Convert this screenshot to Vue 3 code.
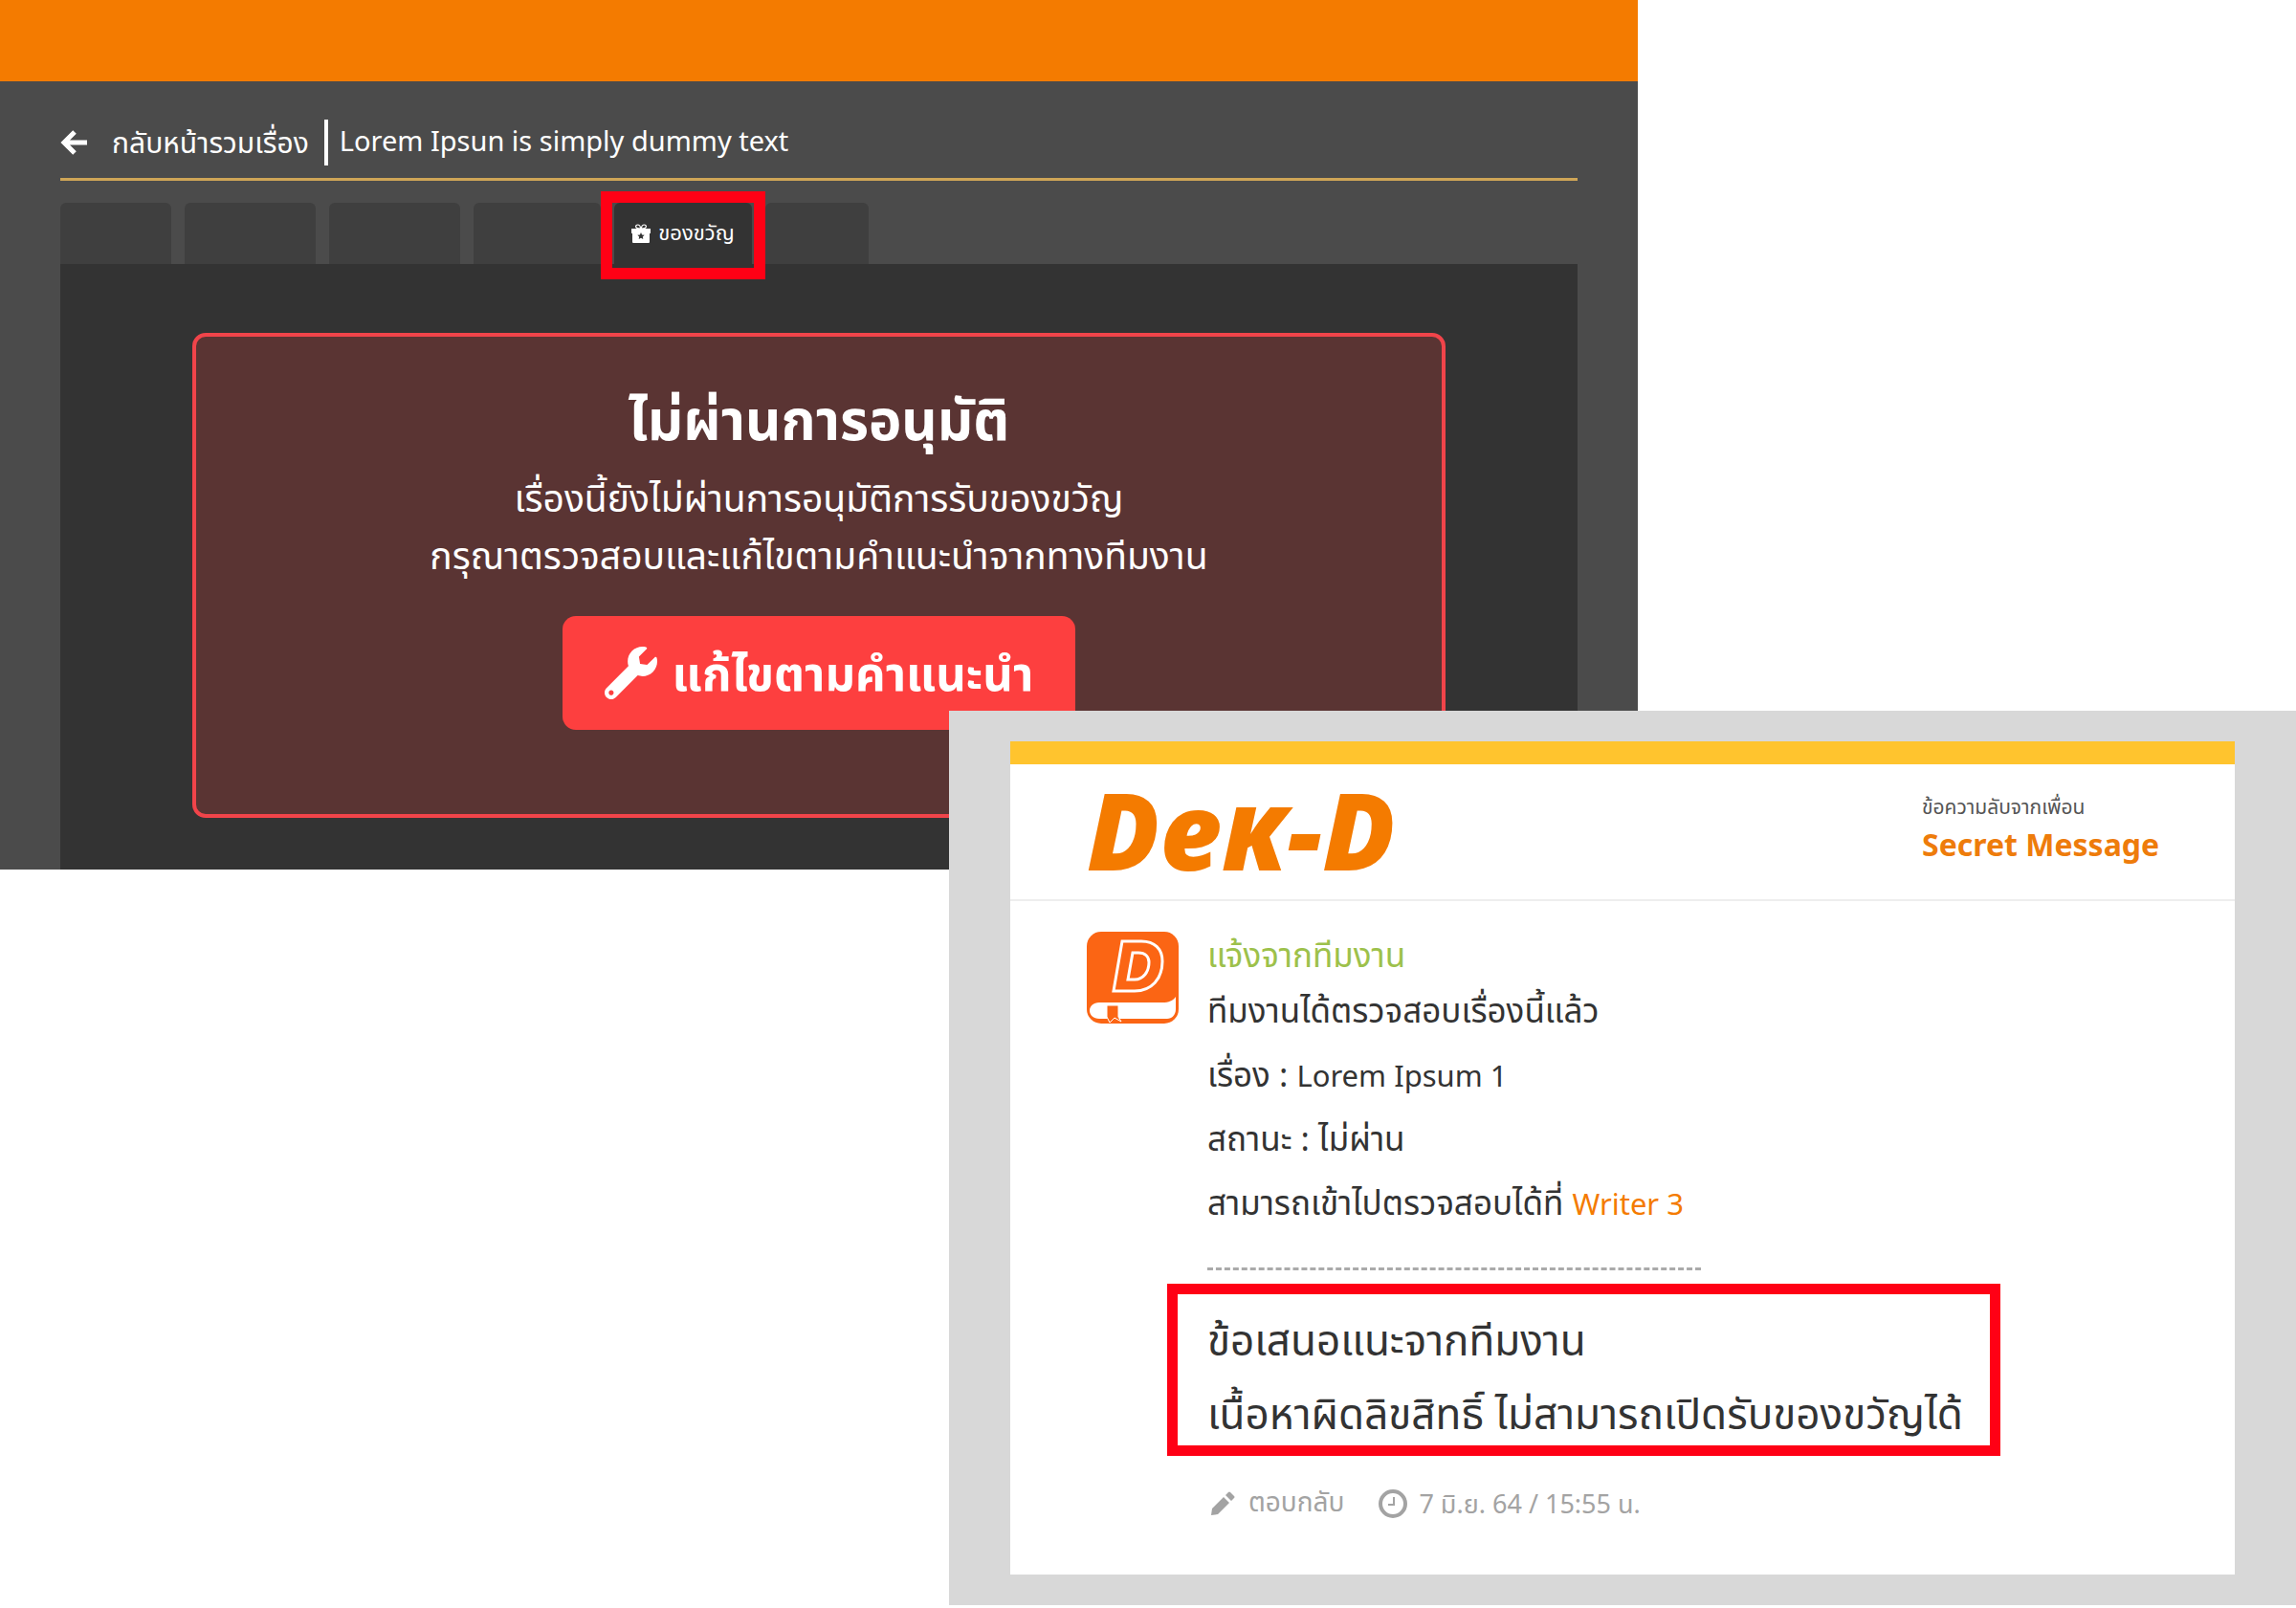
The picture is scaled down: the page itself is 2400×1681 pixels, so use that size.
<template>
  <main class="stage">
    <section class="editor">
      <div class="editor-bar" />
      <div class="editor-body">
        <header class="editor-head">
          <a href="#" class="back-link">
            <svg class="icon-back" viewBox="0 0 30 28" aria-hidden="true">
              <path d="M15 3 4 14l11 11M5 14h23" />
            </svg>
            <span>กลับหน้ารวมเรื่อง</span>
          </a>
          <h1 class="story-title">Lorem Ipsun is simply dummy text</h1>
        </header>

        <nav class="tabs">
          <button
            v-for="tab in tabs"
            :key="tab.id"
            type="button"
            class="tab"
            :class="[tab.id, { active: tab.label }]"
            :aria-label="tab.label || tab.id"
          >
            <template v-if="tab.label">
              <svg class="icon-gift" viewBox="0 0 20 20" aria-hidden="true">
                <path class="ribbon" d="M9.500 5C3 5 4 1 6.500 1c2 0 3 2 3 4ZM10.500 5C17 5 16 1 13.500 1c-2 0-3 2-3 4Z" />
                <path d="M0 5h20v5h-1v9a1 1 0 0 1-1 1H2a1 1 0 0 1-1-1v-9H0z" />
                <path class="star" d="m10 9 1.100 2.400 2.600.300-1.900 1.800.500 2.600L10 14.800l-2.300 1.300.500-2.600-1.900-1.800 2.600-.300z" />
              </svg>
              <span>{{ tab.label }}</span>
              <span class="tab-mark" aria-hidden="true" />
            </template>
          </button>
        </nav>

        <div class="panel">
          <div class="alert">
            <h2 class="alert-title">ไม่ผ่านการอนุมัติ</h2>
            <p class="alert-text">เรื่องนี้ยังไม่ผ่านการอนุมัติการรับของขวัญ</p>
            <p class="alert-text">กรุณาตรวจสอบและแก้ไขตามคำแนะนำจากทางทีมงาน</p>
            <button type="button" class="fix-btn">
              <svg class="icon-wrench" viewBox="0 0 512 512" aria-hidden="true">
                <path d="M507.730 109.100c-2.240-9.030-13.540-12.090-20.120-5.510l-74.360 74.360-67.880-11.310-11.310-67.880 74.360-74.360c6.620-6.620 3.430-17.900-5.660-20.160-47.380-11.740-99.550.910-136.580 37.930-39.640 39.640-50.550 97.100-34.050 147.200L18.740 402.760c-24.990 24.990-24.990 65.510 0 90.500 24.990 24.990 65.510 24.990 90.500 0l213.210-213.210c50.120 16.710 107.470 5.680 147.370-34.220 37.070-37.070 49.700-89.320 37.910-136.730zM64 472c-13.250 0-24-10.750-24-24 0-13.260 10.750-24 24-24s24 10.740 24 24c0 13.250-10.750 24-24 24z" />
              </svg>
              <span class="fix-label">แก้ไขตามคำแนะนำ</span>
            </button>
          </div>
        </div>
      </div>
    </section>

    <section class="mail">
      <article class="card">
        <header class="card-head">
          <div class="logo">De<span class="logo-k">k</span>-D</div>
          <div class="card-kind">
            <p class="kind-sub">ข้อความลับจากเพื่อน</p>
            <p class="kind-title">Secret Message</p>
          </div>
        </header>

        <div class="card-body">
          <svg class="avatar" viewBox="0 0 96 96" aria-hidden="true">
            <rect width="96" height="96" rx="15" fill="#fb6514" />
            <path d="M37 10h20c14 0 22 8 22 21 0 18-11 31-29 31H28z" fill="none" stroke="#fff" stroke-width="3" />
            <path d="M48 22h6c7 0 11 4 11 10 0 10-6 18-15 18h-7z" fill="none" stroke="#fff" stroke-width="3" />
            <path d="M13 74h66c7 0 11-2 14-6v13c0 6-4 10-9 10H13c-6 0-10-4-10-8.500S7 74 13 74z" fill="#fff" />
            <path d="M21 77h12v12l3 5-7-4-5 5-3-6z" fill="#fb6514" stroke="#fff" />
          </svg>

          <div class="message">
            <p class="sender">แจ้งจากทีมงาน</p>
            <p class="line">ทีมงานได้ตรวจสอบเรื่องนี้แล้ว</p>
            <p class="line">เรื่อง : <span class="latin">Lorem Ipsum 1</span></p>
            <p class="line">สถานะ : ไม่ผ่าน</p>
            <p class="line">สามารถเข้าไปตรวจสอบได้ที่ <a href="#" class="latin">Writer 3</a></p>
            <hr class="divider" />
            <div class="advice">
              <p>ข้อเสนอแนะจากทีมงาน</p>
              <p>เนื้อหาผิดลิขสิทธิ์ ไม่สามารถเปิดรับของขวัญได้</p>
            </div>
            <footer class="meta">
              <button type="button" class="reply">
                <svg class="icon-pencil" viewBox="0 0 26 26" aria-hidden="true">
                  <path d="m2 18-1 7 7-1L20 12l-6-6zM16 4l3-3q1-1 2 0l4 4q1 1 0 2l-3 3z" />
                </svg>
                <span>ตอบกลับ</span>
              </button>
              <svg class="icon-clock" viewBox="0 0 30 30" aria-hidden="true">
                <circle cx="15" cy="15" r="13" />
                <path d="M16 8v8h-6" />
              </svg>
              <time datetime="2021-06-07T15:55">7 มิ.ย. 64 / 15:55 น.</time>
            </footer>
          </div>
        </div>
      </article>
    </section>
  </main>
</template>

<script setup>
import { ref } from 'vue';

const tabs = ref([
  { id: 'info', label: '' },
  { id: 'chapters', label: '' },
  { id: 'comments', label: '' },
  { id: 'stats', label: '' },
  { id: 'gift', label: 'ของขวัญ' },
  { id: 'settings', label: '' }
]);
</script>

<style>
body {
  background: #fff;
}
</style>

<style scoped>
.stage {
  font-family: "Noto Sans", "Noto Sans Thai", sans-serif;
  color: #333;
}

h1,
h2,
p {
  margin: 0;
}

button {
  font-family: inherit;
  color: inherit;
  border: none;
  padding: 0;
  cursor: pointer;
}

a {
  text-decoration: none;
}

.editor {
  width: 71.33%;
  background: #4b4b4b;
  color: #fff;
}

.editor-bar {
  height: 85px;
  background: #f47b00;
}

.editor-body {
  padding: 32px 63px 0;
}

.editor-head {
  display: flex;
  align-items: center;
  height: 64px;
  border-bottom: 3px solid #cfa557;
  padding-bottom: 5px;
}

.back-link {
  display: flex;
  align-items: center;
  gap: 24px;
  color: #fff;
  font-size: 30px;
  line-height: 48px;
}

.icon-back {
  width: 30px;
  height: 28px;
  fill: none;
  stroke: #fff;
  stroke-width: 5;
}

.story-title {
  margin-left: 16px;
  padding: 0 0 4px 12px;
  border-left: 4px solid #fff;
  font-size: 29px;
  font-weight: 400;
  line-height: 44px;
}

.tabs {
  display: flex;
  gap: 14px;
  margin-top: 23px;
}

.tab {
  position: relative;
  display: flex;
  align-items: center;
  justify-content: center;
  gap: 8px;
  width: 137px;
  height: 64px;
  border-radius: 6px 6px 0 0;
  background: #3f3f3f;
  font-size: 22px;
}

.tab.info {
  width: 116px;
}

.tab.stats {
  width: 133px;
}

.tab.settings {
  width: 108px;
}

.tab.active {
  width: 144px;
  background: #333;
}

.tab-mark {
  position: absolute;
  inset: -12px -14px -16px;
  border: 12px solid #ff0015;
}

.icon-gift {
  width: 20px;
  height: 20px;
  fill: #fff;
}

.icon-gift .ribbon {
  fill: none;
  stroke: #fff;
  stroke-width: 1.2;
}

.icon-gift .star {
  fill: #333;
}

.panel {
  background: #333;
  padding: 72px 138px 54px;
}

.alert {
  display: flex;
  flex-direction: column;
  align-items: center;
  border: 4px solid #f1444a;
  border-radius: 14px;
  background: #5a3433;
  padding: 53px 40px 88px;
}

.alert-title {
  margin-bottom: 19px;
  font-size: 58px;
  font-weight: 700;
  line-height: 66px;
}

.alert-text {
  font-size: 39px;
  line-height: 60px;
}

.fix-btn {
  display: flex;
  align-items: center;
  gap: 16px;
  height: 119px;
  margin-top: 34px;
  padding: 0 44px;
  border-radius: 14px;
  background: #fd3f3f;
  font-size: 49px;
  font-weight: 700;
}

.fix-label {
  padding-top: 6px;
}

.icon-wrench {
  width: 55px;
  height: 55px;
  fill: #fff;
}

.mail {
  position: relative;
  margin: -166px 0 0 41.33%;
  padding: 32px 64px;
  background: #d8d8d8;
}

.card {
  border-top: 24px solid #ffc42e;
  background: #fff;
}

.card-head {
  display: flex;
  align-items: center;
  justify-content: space-between;
  height: 141px;
  padding: 0 80px;
  border-bottom: 2px solid #eee;
}

.logo {
  padding-bottom: 6px;
  color: #f47b00;
  font-size: 112px;
  font-style: italic;
  font-weight: 900;
  line-height: 120px;
}

.logo-k {
  font-variant-caps: small-caps;
}

.card-kind {
  width: 247px;
  padding-bottom: 6px;
}

.kind-sub {
  color: #555;
  font-size: 21px;
  line-height: 32px;
}

.kind-title {
  color: #ee7c0b;
  font-size: 32px;
  font-weight: 700;
  line-height: 48px;
  white-space: nowrap;
}

.card-body {
  display: flex;
  align-items: flex-start;
  gap: 30px;
  padding: 32px 80px 53px;
}

.avatar {
  flex-shrink: 0;
  width: 96px;
  height: 96px;
}

.message {
  flex: 1;
  font-size: 35px;
}

.sender {
  color: #9dc14b;
  line-height: 48px;
}

.line {
  line-height: 67px;
}

.latin {
  font-size: 31px;
  line-height: 40px;
}

.line a {
  color: #f47b00;
}

.divider {
  width: 516px;
  margin: 35px 0 14px;
  border: none;
  border-top: 3px dashed #aaa;
}

.advice {
  width: fit-content;
  margin-left: -42px;
  padding: 9px 28px 0 31px;
  border: 11px solid #ff0015;
  font-size: 44px;
  line-height: 77px;
}

.advice p:last-child {
  margin-bottom: -5px;
}

.meta {
  display: flex;
  align-items: center;
  margin-top: 28px;
  color: #a3a3a3;
  font-size: 27px;
  line-height: 40px;
}

.reply {
  display: flex;
  align-items: center;
  gap: 14px;
  margin-right: 36px;
  background: none;
  font-size: 28px;
}

.icon-pencil {
  width: 26px;
  height: 26px;
  margin-left: 3px;
  fill: #a3a3a3;
}

.icon-clock {
  width: 30px;
  height: 30px;
  margin-right: 12px;
  fill: none;
  stroke: #a3a3a3;
  stroke-width: 4;
}

.icon-clock path {
  stroke-width: 2;
}
</style>
